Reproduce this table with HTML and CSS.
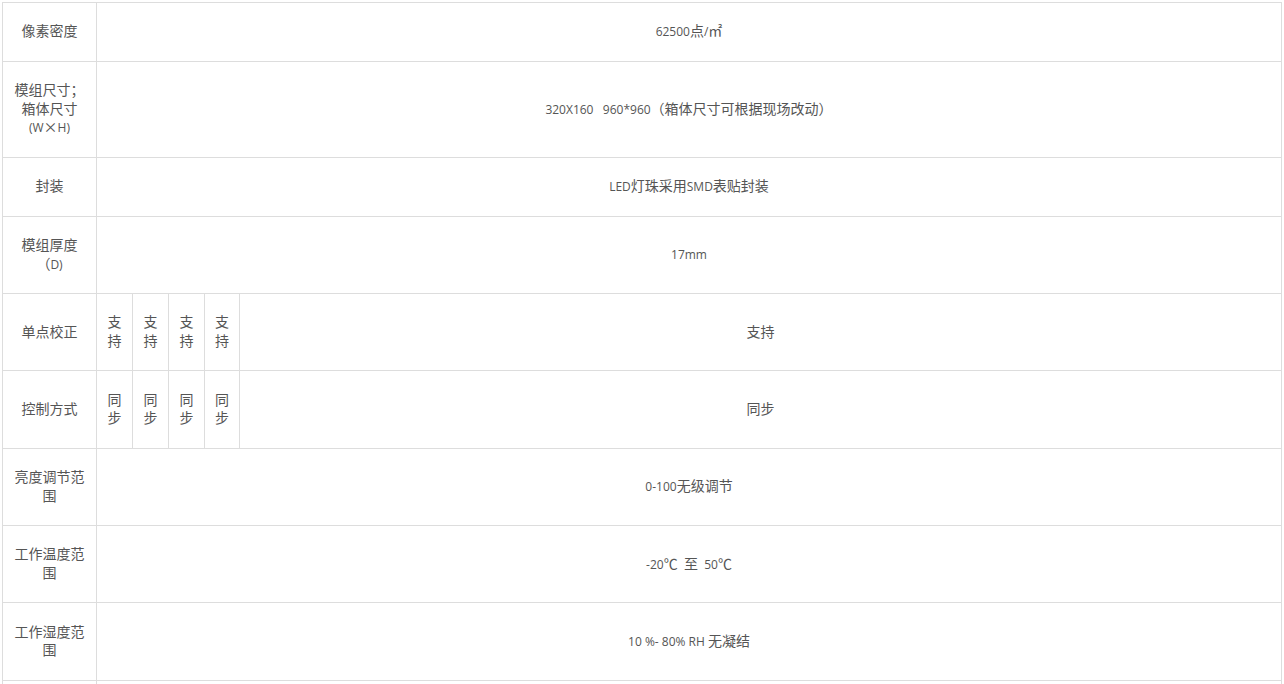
FILE: index.html
```html
<!DOCTYPE html>
<html lang="zh-CN">
<head>
<meta charset="utf-8">
<title>参数</title>
<link rel="stylesheet" href="styles.css">
</head>
<body>
<table class="spec">
  <colgroup>
    <col class="c-label">
    <col class="c-sub">
    <col class="c-sub">
    <col class="c-sub">
    <col class="c-sub4">
    <col>
  </colgroup>
  <tbody>
    <tr>
      <td class="label">像素密度</td>
      <td colspan="5"><span class="lt">62500</span>点<span class="lt">/</span>㎡</td>
    </tr>
    <tr>
      <td class="label">模组尺寸；<br>箱体尺寸<br><span class="lt">(W</span>×<span class="lt">H)</span></td>
      <td colspan="5"><span class="lt">320X160&nbsp;&nbsp; 960*960</span>（箱体尺寸可根据现场改动）</td>
    </tr>
    <tr>
      <td class="label">封装</td>
      <td colspan="5"><span class="lt">LED</span>灯珠采用<span class="lt">SMD</span>表贴封装</td>
    </tr>
    <tr>
      <td class="label">模组厚度<br>（<span class="lt">D)</span></td>
      <td colspan="5"><span class="lt">17mm</span></td>
    </tr>
    <tr>
      <td class="label">单点校正</td>
      <td class="sub">支持</td>
      <td class="sub">支持</td>
      <td class="sub">支持</td>
      <td class="sub">支持</td>
      <td>支持</td>
    </tr>
    <tr>
      <td class="label">控制方式</td>
      <td class="sub">同步</td>
      <td class="sub">同步</td>
      <td class="sub">同步</td>
      <td class="sub">同步</td>
      <td>同步</td>
    </tr>
    <tr>
      <td class="label">亮度调节范围</td>
      <td colspan="5"><span class="lt">0-100</span>无级调节</td>
    </tr>
    <tr>
      <td class="label">工作温度范围</td>
      <td colspan="5"><span class="lt">-20</span>℃&nbsp; 至&nbsp; <span class="lt">50</span>℃</td>
    </tr>
    <tr>
      <td class="label">工作湿度范围</td>
      <td colspan="5"><span class="lt">10 %- 80% RH </span>无凝结</td>
    </tr>
    <tr>
      <td class="label">&nbsp;</td>
      <td colspan="5">&nbsp;</td>
    </tr>
  </tbody>
</table>
</body>
</html>
```

FILE: styles.css
```css
html, body {
  background: #ffffff;
}

body {
  margin: 2px;
  font-family: "Noto Sans CJK SC", "Open Sans", sans-serif;
  font-size: 14px;
  line-height: 18.6px;
  color: #555555;
}

.spec {
  width: 1280px;
  table-layout: fixed;
  border-collapse: collapse;
}

.c-label { width: 94px; }
.c-sub { width: 36px; }
.c-sub4 { width: 35px; }

.spec td {
  border: 1px solid #dddddd;
  padding: 18.4px 10px 20.8px;
  text-align: center;
  vertical-align: middle;
  line-height: 18.6px;
}

.lt {
  font-family: "Open Sans", "Noto Sans CJK SC", sans-serif;
  font-size: 12px;
  line-height: 12px;
}
```
